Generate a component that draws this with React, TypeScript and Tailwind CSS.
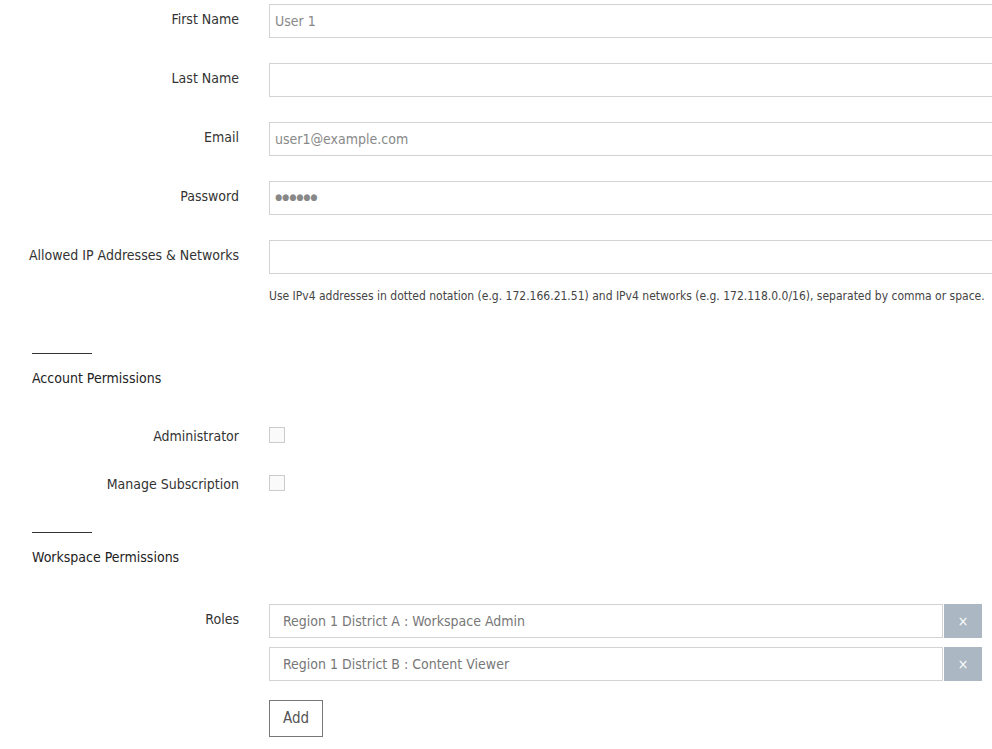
const font = { fontFamily: '"DejaVu Sans Condensed", "Liberation Sans", sans-serif' };

function Row({ label, value, dots }: { label: string; value?: string; dots?: boolean }) {
  return (
    <div className="flex h-[59px] items-start">
      <div className="w-[239px] shrink-0 pt-[5px] text-right text-[14px] text-[#333]">{label}</div>
      <div className="ml-[30px] flex h-[34px] w-[760px] shrink-0 items-center border border-[#d3d3d3] px-[5px] text-[14px] text-[#888]">
        {dots ? <span className="text-[9px] tracking-[0px] text-[#888]">●●●●●●</span> : value}
      </div>
    </div>
  );
}

function Section({ title }: { title: string }) {
  return (
    <div className="pl-[32px]">
      <div className="h-px w-[60px] bg-[#333]" />
      <div className="mt-[14px] text-[14px] text-[#222]">{title}</div>
    </div>
  );
}

function Check({ label }: { label: string }) {
  return (
    <div className="flex h-[48px] items-start">
      <div className="w-[239px] shrink-0 text-right text-[14px] text-[#333]">{label}</div>
      <div className="ml-[30px] mt-[1px] h-[16px] w-[16px] border border-[#ccc] bg-[#fafafa]" />
    </div>
  );
}

function Role({ text }: { text: string }) {
  return (
    <div className="flex h-[34px]">
      <div className="flex w-[674px] items-center border border-[#d3d3d3] px-[13px] text-[14px] text-[#777]">{text}</div>
      <div className="ml-px flex w-[38px] items-center justify-center bg-[#abb8c3] text-[14px] text-white">×</div>
    </div>
  );
}

export default function App() {
  return (
    <div className="h-[749px] w-[992px] overflow-hidden bg-white pt-[4px]" style={font}>
      <Row label="First Name" value="User 1" />
      <Row label="Last Name" />
      <Row label="Email" value="user1@example.com" />
      <Row label="Password" dots />
      <Row label="Allowed IP Addresses & Networks" />
      <div className="-mt-[12px] pl-[269px] text-[12px] text-[#444] whitespace-nowrap">
        Use IPv4 addresses in dotted notation (e.g. 172.166.21.51) and IPv4 networks (e.g. 172.118.0.0/16), separated by comma or space.
      </div>
      <div className="mt-[48px]"><Section title="Account Permissions" /></div>
      <div className="mt-[37px]">
        <Check label="Administrator" />
        <Check label="Manage Subscription" />
      </div>
      <div className="mt-[10px]"><Section title="Workspace Permissions" /></div>
      <div className="mt-[36px] flex items-start">
        <div className="w-[239px] shrink-0 pt-[5px] text-right text-[14px] text-[#333]">Roles</div>
        <div className="ml-[30px] flex flex-col gap-[9px]">
          <Role text="Region 1 District A : Workspace Admin" />
          <Role text="Region 1 District B : Content Viewer" />
          <div className="mt-[10px] flex h-[37px] w-[54px] items-center justify-center border border-[#777] text-[15px] text-[#555]">Add</div>
        </div>
      </div>
    </div>
  );
}
